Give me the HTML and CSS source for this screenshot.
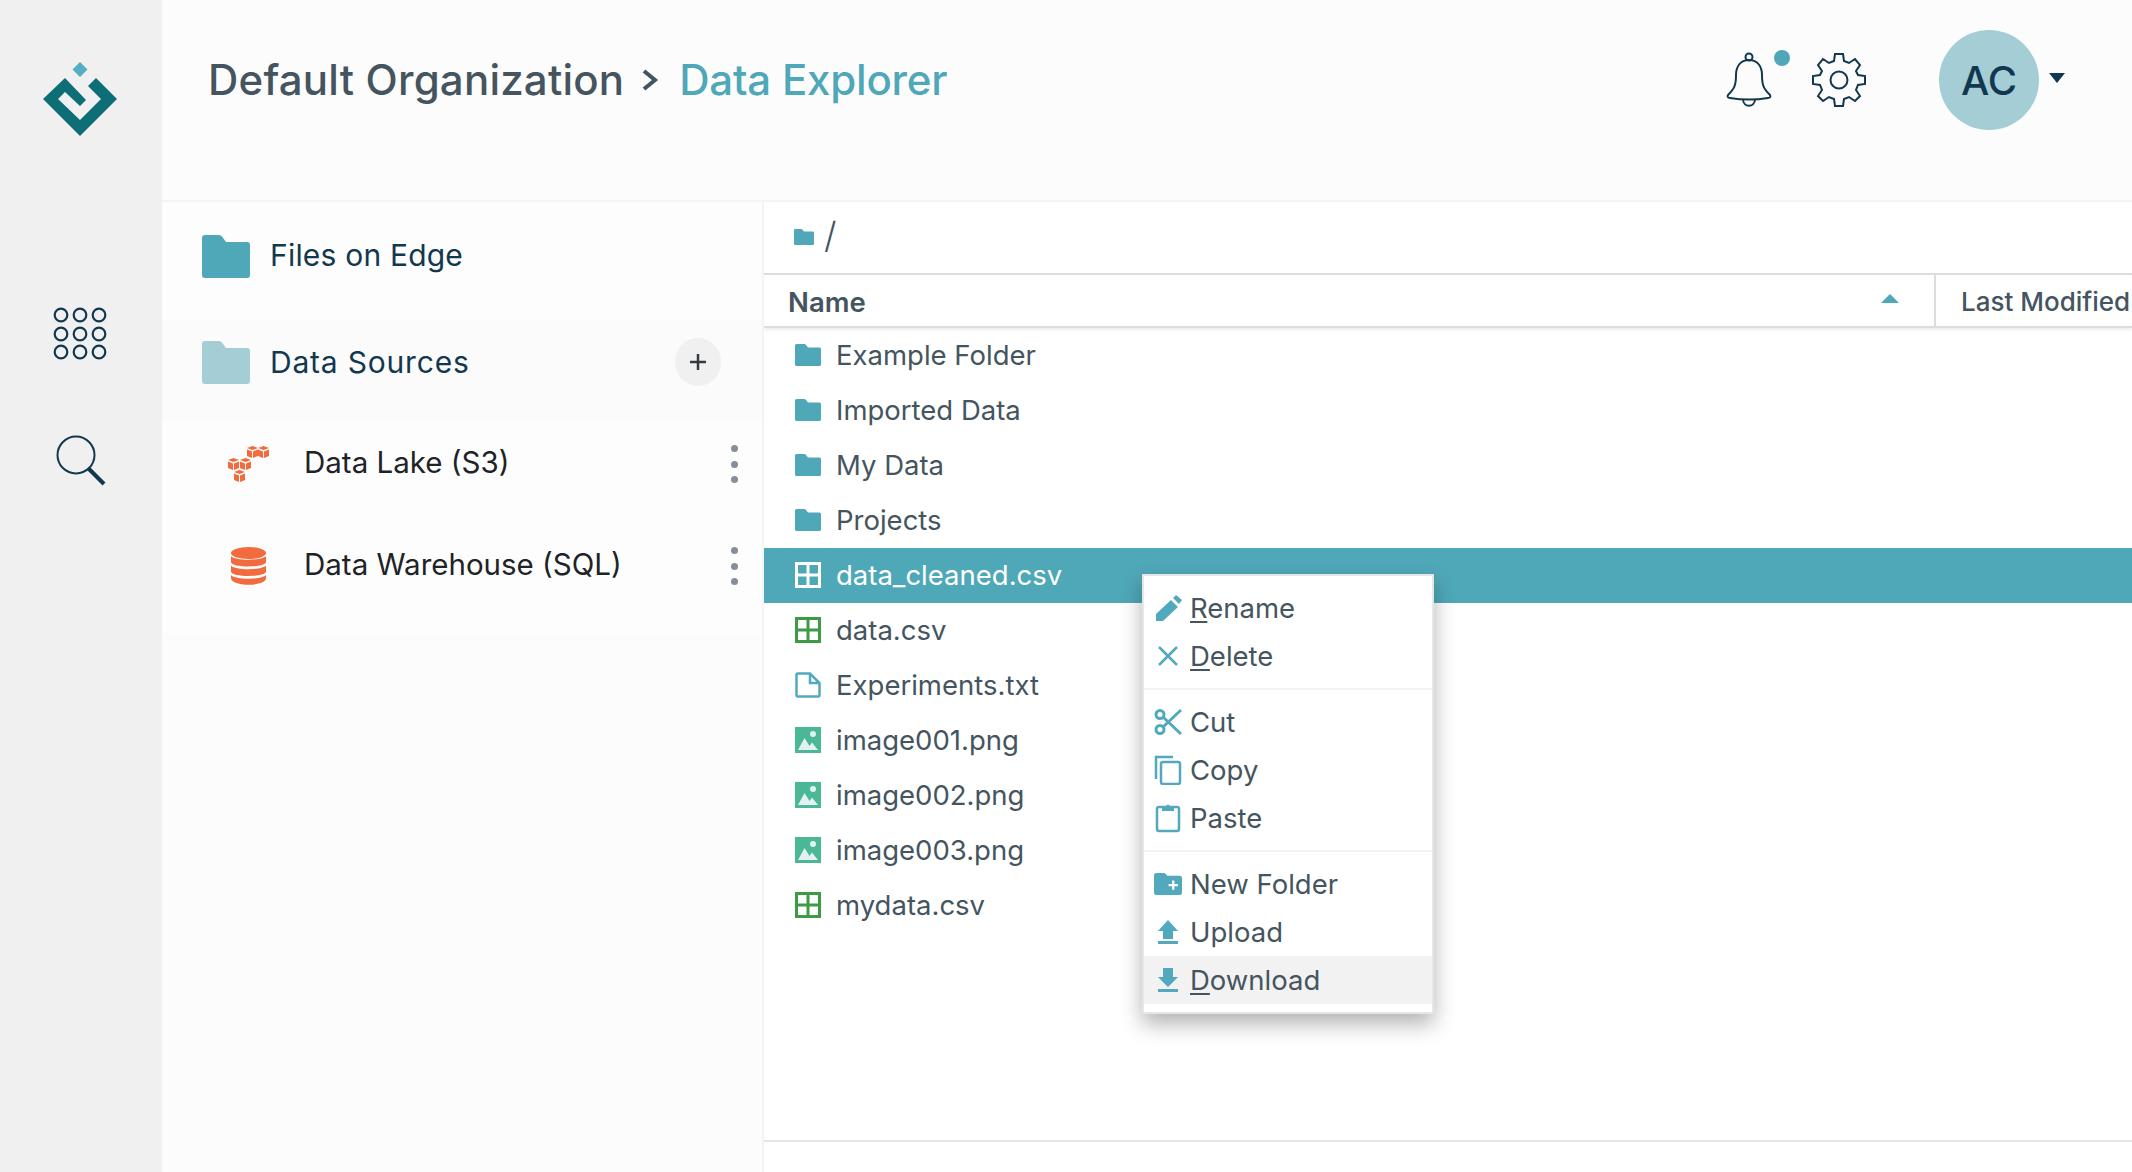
FILE: index.html
```html
<!DOCTYPE html>
<html lang="en">
<head>
    <meta charset="UTF-8">
    <meta name="viewport" content="width=device-width, initial-scale=1.0">
    <title>Data Explorer</title>
    <link rel="stylesheet" href="styles.css">
</head>
<body>
    <svg class="icon-defs" width="0" height="0">
        <symbol id="folder" viewBox="0 0 48 43" preserveAspectRatio="none">
            <path d="M3 0h14q2 0 3 1.500l4 5.500h21q3 0 3 3v30q0 3-3 3H3q-3 0-3-3V3q0-3 3-3z"/>
        </symbol>
        <symbol id="table" viewBox="0 0 26 26">
            <path d="M1.500 1.500h23v23h-23zM13 1.500v23M1.500 13h23" fill="none" stroke="currentColor" stroke-width="3"/>
        </symbol>
        <symbol id="image" viewBox="0 0 26 26">
            <rect width="26" height="26" fill="#4ab894"/>
            <circle cx="18" cy="7" r="3" fill="#e3f1f6"/>
            <path d="M3 23l6.500-12 5 8 2.500-3.500 6 7.500z" fill="#e3f1f6"/>
        </symbol>
        <g id="cube">
            <path d="M0 2l5.500-2L11 2 5.500 4z"/>
            <path d="M0 3.500l5 2V12l-5-2zM11 3.500l-5 2V12l5-2z"/>
        </g>
    </svg>

    <div class="app">
        <nav class="rail">
            <svg class="logo" width="74" height="74" viewBox="0 0 74 74">
                <path d="M37 0l7.500 7.500L37 15l-7.500-7.500z" fill="#52aec2"/>
                <path d="M22 16L0 37l37 37 37-37-21-21-8 8 13 13-21 21-22-21 7-7 15 14 6-6z" fill="#0e6e75"/>
            </svg>
            <svg class="rail-icon" width="56" height="56" viewBox="0 0 56 56" fill="none" stroke="#12384f" stroke-width="2.200">
                <circle cx="9" cy="9" r="6.300"/><circle cx="28" cy="9" r="6.300"/><circle cx="47" cy="9" r="6.300"/>
                <circle cx="9" cy="28" r="6.300"/><circle cx="28" cy="28" r="6.300"/><circle cx="47" cy="28" r="6.300"/>
                <circle cx="9" cy="46" r="6.300"/><circle cx="28" cy="46" r="6.300"/><circle cx="47" cy="46" r="6.300"/>
            </svg>
            <svg class="rail-icon search" width="52" height="52" viewBox="0 0 52 52" fill="none" stroke="#12384f">
                <circle cx="20" cy="20" r="18.500" stroke-width="2"/>
                <path d="M32 33l16 16" stroke-width="4"/>
            </svg>
        </nav>

        <div class="main">
            <header class="topbar">
                <h1 class="crumbs"><span class="crumb-org">Default Organization</span>
                    <svg class="crumb-sep" width="18" height="24" viewBox="0 0 18 24" fill="none" stroke="#455560" stroke-width="4"><path d="M3 3l11 9-11 9"/></svg>
                    <span class="crumb-current">Data Explorer</span>
                </h1>
                <div class="top-actions">
                    <div class="bell">
                        <svg width="48" height="56" viewBox="0 0 48 56" fill="none" stroke="#12384f" stroke-width="2">
                            <circle cx="23" cy="5" r="3.500"/>
                            <path d="M23 8c-9 0-13 7-13 15 0 11-2 14-8 20-1 2 0 3 2 3 12 2 26 2 38 0 2 0 3-1 2-3-6-6-8-9-8-20 0-8-4-15-13-15z"/>
                            <path d="M17 47c0 9 12 9 12 0"/>
                        </svg>
                        <span class="bell-dot"></span>
                    </div>
                    <svg class="gear" width="56" height="56" viewBox="0 0 56 56" fill="none" stroke="#12384f" stroke-width="2">
                        <circle cx="28" cy="28" r="8.500"/>
                        <path d="M24 2h8l1 7 5 2 6-4 5 6-4 6 2 4 7 1v8l-7 1-2 5 4 6-5 5-6-4-5 2-1 7h-8l-1-7-5-2-6 4-5-5 4-6-2-5-7-1v-8l7-1 2-4-4-6 5-6 6 4 5-2z"/>
                    </svg>
                    <div class="avatar">AC</div>
                    <span class="avatar-caret"></span>
                </div>
            </header>

            <div class="content">
                <aside class="sources">
                    <div class="source-head source-edge">
                        <svg class="big-folder edge" width="48" height="43"><use href="#folder"/></svg>
                        <span>Files on Edge</span>
                    </div>
                    <div class="source-head source-data">
                        <svg class="big-folder data" width="48" height="43"><use href="#folder"/></svg>
                        <span>Data Sources</span>
                        <button class="add-btn" type="button">
                            <svg width="20" height="20" viewBox="0 0 20 20" stroke="#343a40" stroke-width="2.500"><path d="M10 2v16M2 10h16"/></svg>
                        </button>
                    </div>
                    <div class="source-list">
                        <div class="source-item">
                            <svg class="source-icon" width="41" height="36" viewBox="0 0 41 36" fill="#f26b3e">
                                <use href="#cube" x="19" y="0"/>
                                <use href="#cube" x="30" y="0"/>
                                <use href="#cube" x="0" y="12"/>
                                <use href="#cube" x="12" y="12"/>
                                <use href="#cube" x="6" y="24"/>
                            </svg>
                            <span class="source-name">Data Lake (S3)</span>
                            <span class="kebab"><i></i><i></i><i></i></span>
                        </div>
                        <div class="source-item">
                            <svg class="source-icon" width="41" height="38" viewBox="-3 0 41 38" fill="#f26b3e">
                                <ellipse cx="17.500" cy="6" rx="17.500" ry="6"/>
                                <path d="M0 9c4 5 31 5 35 0v6c0 6-35 6-35 0zM0 18.500c4 5 31 5 35 0v6c0 6-35 6-35 0zM0 28c4 5 31 5 35 0v3c0 9-35 9-35 0z"/>
                            </svg>
                            <span class="source-name">Data Warehouse (SQL)</span>
                            <span class="kebab"><i></i><i></i><i></i></span>
                        </div>
                    </div>
                </aside>

                <section class="browser">
                    <div class="path-bar">
                        <svg class="path-folder" width="20" height="16"><use href="#folder"/></svg>
                        <span class="path-text">/</span>
                    </div>
                    <div class="table-head">
                        <div class="col-name">Name <span class="sort-caret"></span></div>
                        <div class="col-modified">Last Modified</div>
                    </div>
                    <div class="file-list">
                        <div class="file-row"><svg class="file-folder" width="26" height="22"><use href="#folder"/></svg>Example Folder</div>
                        <div class="file-row"><svg class="file-folder" width="26" height="22"><use href="#folder"/></svg>Imported Data</div>
                        <div class="file-row"><svg class="file-folder" width="26" height="22"><use href="#folder"/></svg>My Data</div>
                        <div class="file-row"><svg class="file-folder" width="26" height="22"><use href="#folder"/></svg>Projects</div>
                        <div class="file-row selected"><svg class="file-table" width="26" height="26"><use href="#table"/></svg>data_cleaned.csv</div>
                        <div class="file-row"><svg class="file-table" width="26" height="26"><use href="#table"/></svg>data.csv</div>
                        <div class="file-row">
                            <svg width="26" height="26" viewBox="0 0 26 26" fill="none" stroke="#52a9bd" stroke-width="2.500"><path d="M3 1.500h12l9.500 9.500v12q0 1.500-1.500 1.500H3q-1.500 0-1.500-1.500v-20q0-1.500 1.500-1.500zM15 1.500V11h9.500"/></svg>
                            Experiments.txt
                        </div>
                        <div class="file-row"><svg width="26" height="26"><use href="#image"/></svg>image001.png</div>
                        <div class="file-row"><svg width="26" height="26"><use href="#image"/></svg>image002.png</div>
                        <div class="file-row"><svg width="26" height="26"><use href="#image"/></svg>image003.png</div>
                        <div class="file-row"><svg class="file-table" width="26" height="26"><use href="#table"/></svg>mydata.csv</div>
                    </div>
                </section>
            </div>
        </div>
    </div>

    <ul class="context-menu">
        <li class="menu-item">
            <svg width="28" height="28" viewBox="0 0 28 28"><path d="M2 27v-7L17 6l7 7L9 27zM19 4l3-3 6 5-3 4z"/></svg>
            <span><u>R</u>ename</span>
        </li>
        <li class="menu-item">
            <svg width="28" height="28" viewBox="0 0 28 28" fill="none" stroke="#52a9bd" stroke-width="2.500"><path d="M5 5l18 18M23 5L5 23"/></svg>
            <span><u>D</u>elete</span>
        </li>
        <li class="menu-sep"></li>
        <li class="menu-item">
            <svg width="28" height="28" viewBox="0 0 28 28" fill="none" stroke="#52a9bd" stroke-width="3"><circle cx="6" cy="6.500" r="4"/><circle cx="6" cy="21.500" r="4"/><path d="M9 9l18 17M9 19L27 2"/></svg>
            <span>Cut</span>
        </li>
        <li class="menu-item">
            <svg width="28" height="30" viewBox="0 0 28 30" fill="none" stroke="#52a9bd" stroke-width="2.500"><path d="M2 24V2h17"/><rect x="7" y="7" width="19" height="22" rx="2"/></svg>
            <span>Copy</span>
        </li>
        <li class="menu-item">
            <svg width="28" height="30" viewBox="0 0 28 30"><rect x="3" y="4" width="22" height="24" rx="2" fill="none" stroke="#52a9bd" stroke-width="2.500"/><path d="M8 3h4q2-3 4 0h4v5H8z"/></svg>
            <span>Paste</span>
        </li>
        <li class="menu-sep"></li>
        <li class="menu-item">
            <svg width="28" height="24" viewBox="0 0 48 38"><path fill-rule="evenodd" d="M4 0h14l5 5h21q4 0 4 4v25q0 4-4 4H4q-4 0-4-4V4q0-4 4-4zm27 13v6h-6v4h6v6h4v-6h6v-4h-6v-6z"/></svg>
            <span>New Folder</span>
        </li>
        <li class="menu-item">
            <svg width="28" height="28" viewBox="0 0 28 28"><path d="M14 2l10 11h-5v8H9v-8H4zM4 23h20v3H4z"/></svg>
            <span>Upload</span>
        </li>
        <li class="menu-item hover">
            <svg width="28" height="28" viewBox="0 0 28 28"><path d="M9 2h10v9h5L14 21 4 11h5zM4 23h20v3H4z"/></svg>
            <span><u>D</u>ownload</span>
        </li>
    </ul>
</body>
</html>
```

FILE: styles.css
```css
* {
    box-sizing: border-box;
}

html,
body {
    margin: 0;
    height: 100%;
    overflow: hidden;
}

body {
    font-family: Inter, "Noto Sans", sans-serif;
    color: #455560;
    background-color: #fff;
    position: relative;
}

.icon-defs {
    position: absolute;
}

.app {
    display: flex;
    height: 100vh;
}

/* left icon rail */
.rail {
    width: 162px;
    flex-shrink: 0;
    background-color: #f0f0f0;
    display: flex;
    flex-direction: column;
    align-items: center;
    padding: 62px 2px 0 0;
}

.rail-icon {
    display: block;
    margin-top: 170px;
}

.rail-icon.search {
    margin-top: 73px;
    margin-left: 3px;
}

.main {
    flex: 1;
    min-width: 0;
    display: flex;
    flex-direction: column;
}

/* top bar */
.topbar {
    height: 202px;
    flex-shrink: 0;
    background-color: #fcfcfc;
    border-bottom: 2px solid #f4f4f4;
    display: flex;
    justify-content: space-between;
    align-items: flex-start;
    padding: 51px 67px 0 46px;
}

.crumbs {
    margin: 0;
    font-size: 42px;
    font-weight: 500;
    line-height: 58px;
    color: #455560;
    display: flex;
    align-items: center;
    gap: 21px;
}

.crumb-org {
    letter-spacing: 0.2px;
}

.crumb-sep {
    margin-left: -4px;
}

.crumb-current {
    margin-left: -1px;
    letter-spacing: -0.2px;
    color: #4fa8b8;
}

.top-actions {
    display: flex;
    align-items: center;
    margin-top: -21px;
}

.bell {
    position: relative;
    width: 48px;
    height: 56px;
}

.bell-dot {
    position: absolute;
    top: -2px;
    left: 48px;
    width: 16px;
    height: 16px;
    border-radius: 50%;
    background-color: #4fa8b8;
}

.gear {
    margin-left: 37px;
}

.avatar {
    width: 100px;
    height: 100px;
    margin-left: 72px;
    border-radius: 50%;
    background-color: #a5cdd6;
    color: #12384f;
    font-size: 40px;
    font-weight: 500;
    display: flex;
    align-items: center;
    justify-content: center;
}

.avatar-caret {
    width: 0;
    height: 0;
    margin: 0 0 4px 10px;
    border-left: 8px solid transparent;
    border-right: 8px solid transparent;
    border-top: 10px solid #12384f;
}

.content {
    flex: 1;
    display: flex;
    min-height: 0;
}

/* data source panel */
.sources {
    width: 602px;
    flex-shrink: 0;
    background-color: #fcfcfc;
    border-right: 2px solid #f4f4f4;
}

.source-head {
    display: flex;
    align-items: center;
    padding-left: 40px;
    font-size: 30px;
    color: #12384f;
}

.source-edge {
    height: 118px;
    padding-bottom: 10px;
    letter-spacing: 0.2px;
    background-color: #fdfdfd;
}

.source-edge span {
    margin-bottom: 3px;
}

.source-data {
    height: 101px;
    padding-bottom: 17px;
    padding-right: 41px;
    letter-spacing: 0.8px;
    background-color: #fbfbfb;
}

.big-folder {
    margin-right: 20px;
    flex-shrink: 0;
}

.big-folder.edge {
    fill: #4fa8b8;
}

.big-folder.data {
    fill: #a5cdd6;
}

.add-btn {
    width: 46px;
    height: 48px;
    margin-left: auto;
    padding: 0;
    border: none;
    border-radius: 50%;
    background-color: #f0f0f0;
    display: flex;
    align-items: center;
    justify-content: center;
}

.source-list {
    display: flex;
    flex-direction: column;
    gap: 20px;
    padding-bottom: 30px;
    background-color: #fdfdfd;
}

.source-item {
    height: 82px;
    display: flex;
    align-items: center;
    padding: 0 24px 0 66px;
    font-size: 29.500px;
    color: #1e2328;
}

.source-icon {
    flex-shrink: 0;
    margin-top: 4px;
}

.source-name {
    margin-left: 35px;
}

.kebab {
    margin-left: auto;
    margin-top: 4px;
    display: flex;
    flex-direction: column;
    gap: 8.500px;
}

.kebab i {
    display: block;
    width: 7px;
    height: 7px;
    border-radius: 50%;
    background-color: #868e9c;
}

/* file browser */
.browser {
    flex: 1;
    min-width: 0;
    overflow: hidden;
    border-bottom: 2px solid #e6e6e6;
    margin-bottom: 30px;
    background-color: #fff;
}

.path-bar {
    height: 71px;
    display: flex;
    align-items: center;
    padding-left: 30px;
    padding-bottom: 1px;
}

.path-folder {
    fill: #4fa8b8;
}

.path-text {
    margin-left: 10px;
    margin-bottom: 5px;
    font-size: 36px;
    font-weight: 300;
}

.table-head {
    height: 55px;
    display: flex;
    border-top: 2px solid #ddd;
    border-bottom: 2px solid #ddd;
    box-shadow: 0 2px 3px rgba(0, 0, 0, 0.08);
    font-size: 27.500px;
    font-weight: 600;
    white-space: nowrap;
}

.col-name {
    width: 1172px;
    flex-shrink: 0;
    padding-left: 24px;
    padding-top: 2px;
    display: flex;
    align-items: center;
    border-right: 2px solid #ddd;
    position: relative;
}

.sort-caret {
    width: 0;
    height: 0;
    margin-left: auto;
    margin-right: 35px;
    margin-bottom: 7px;
    border-left: 9px solid transparent;
    border-right: 9px solid transparent;
    border-bottom: 9px solid #4fa8b8;
}

.col-modified {
    padding-left: 25px;
    padding-top: 2px;
    display: flex;
    align-items: center;
    font-size: 26px;
    font-weight: 500;
}

.file-row {
    height: 55px;
    display: flex;
    align-items: center;
    gap: 15px;
    padding-left: 31px;
    padding-bottom: 2px;
    font-size: 27.500px;
    color: #455560;
}

.file-row svg {
    flex-shrink: 0;
}

.file-folder {
    fill: #4fa8b8;
}

.file-table {
    color: #3d9b45;
}

.file-row.selected {
    background-color: #4fa8b8;
    color: #fff;
}

.file-row.selected .file-table {
    color: #fff;
}

/* right click menu */
.context-menu {
    position: absolute;
    left: 1142px;
    top: 574px;
    width: 292px;
    margin: 0;
    padding: 8px 0;
    list-style: none;
    background-color: #fff;
    border: 2px solid #e6e6e6;
    box-shadow: 0 10px 20px rgba(0, 0, 0, 0.3);
    font-size: 27.500px;
    color: #455560;
}

.menu-item {
    height: 48px;
    display: flex;
    align-items: center;
    padding-left: 10px;
}

.menu-item span {
    margin-bottom: 1px;
}

.menu-item svg {
    width: 28px;
    margin-right: 8px;
    flex-shrink: 0;
    fill: #52a9bd;
}

.menu-item svg[fill="none"],
.menu-item svg rect[fill="none"] {
    fill: none;
}

.menu-item u {
    text-underline-offset: 3px;
}

.menu-item.hover {
    background-color: #f2f2f2;
}

.menu-sep {
    height: 2px;
    margin: 8px 0;
    background-color: #f2f2f2;
}
```
